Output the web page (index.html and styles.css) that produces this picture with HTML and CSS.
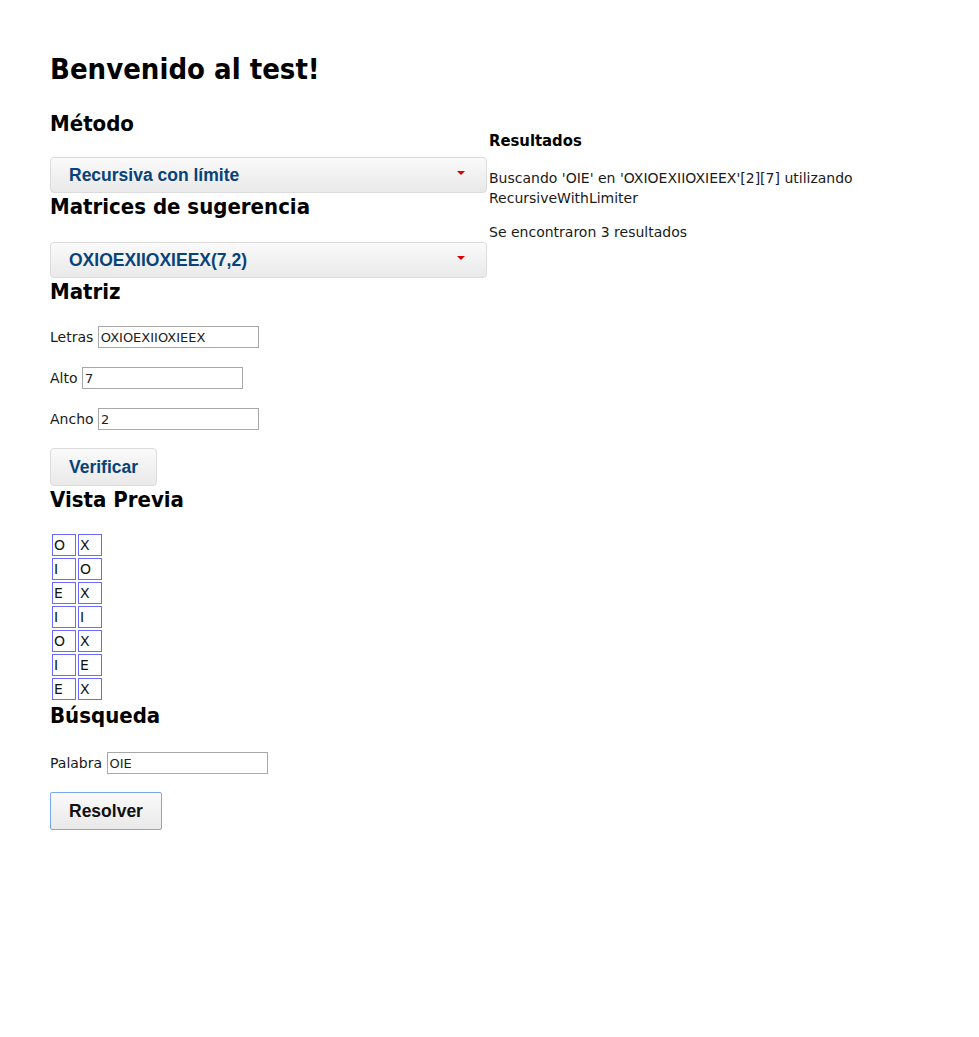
FILE: index.html
```html
<!DOCTYPE html>
<html lang="es">
<head>
<meta charset="utf-8">
<title>Benvenido al test!</title>
<link rel="stylesheet" href="styles.css">
</head>
<body>
<div class="page">
  <div class="left">
    <h1 class="title">Benvenido al test!</h1>
    <h2 class="section section-first">Método</h2>
    <div class="select"><span>Recursiva con límite</span><span class="caret"></span></div>
    <h2 class="section">Matrices de sugerencia</h2>
    <div class="select select-second"><span>OXIOEXIIOXIEEX(7,2)</span><span class="caret"></span></div>
    <h2 class="section">Matriz</h2>
    <p class="field field-first">Letras <input class="input" type="text" value="OXIOEXIIOXIEEX"></p>
    <p class="field">Alto <input class="input" type="text" value="7"></p>
    <p class="field">Ancho <input class="input" type="text" value="2"></p>
    <button class="btn">Verificar</button>
    <h2 class="section">Vista Previa</h2>
    <table class="grid">
      <tr><td>O</td><td>X</td></tr>
      <tr><td>I</td><td>O</td></tr>
      <tr><td>E</td><td>X</td></tr>
      <tr><td>I</td><td>I</td></tr>
      <tr><td>O</td><td>X</td></tr>
      <tr><td>I</td><td>E</td></tr>
      <tr><td>E</td><td>X</td></tr>
    </table>
    <h2 class="section">Búsqueda</h2>
    <p class="field field-search">Palabra <input class="input" type="text" value="OIE"></p>
    <button class="btn btn-focus">Resolver</button>
  </div>
  <div class="right">
    <h3 class="sub">Resultados</h3>
    <p class="text">Buscando 'OIE' en 'OXIOEXIIOXIEEX'[2][7] utilizando RecursiveWithLimiter</p>
    <p class="text text-second">Se encontraron 3 resultados</p>
  </div>
</div>
</body>
</html>
```
FILE: styles.css
```css
html, body {
  margin: 0;
  padding: 0;
  background: #fff;
}
body {
  font-family: "DejaVu Sans", sans-serif;
  font-size: 14px;
  color: #1a1a1a;
}
.page {
  display: flex;
  padding: 50px 50px 0 50px;
}
.left {
  width: 437px;
  flex: none;
}
.right {
  flex: 1;
  padding-left: 2px;
  padding-top: 81px;
}
.title {
  font-family: "DejaVu Sans Condensed", "DejaVu Sans", sans-serif;
  font-size: 29px;
  line-height: 38px;
  margin: 0;
  font-weight: bold;
  color: #000;
}
.section {
  font-family: "DejaVu Sans Condensed", "DejaVu Sans", sans-serif;
  font-size: 22px;
  line-height: 28px;
  margin: 0;
  font-weight: bold;
  color: #000;
}
.section-first {
  margin-top: 22px;
}
.select {
  margin-top: 19px;
  height: 34px;
  border: 1px solid #dcdcdc;
  border-radius: 4px;
  background: linear-gradient(#fafafa, #e9e9e9);
  display: flex;
  align-items: center;
  justify-content: space-between;
  padding: 0 21px 0 18px;
  font-family: "Liberation Sans", Arial, sans-serif;
  font-weight: bold;
  font-size: 17.5px;
  color: #07427a;
}
.select-second {
  margin-top: 21px;
}
.caret {
  width: 0;
  height: 0;
  border-left: 4px solid transparent;
  border-right: 4px solid transparent;
  border-top: 4px solid #d80000;
  margin-top: -4px;
}
.field {
  margin: 19px 0 0 0;
  line-height: 22px;
  height: 22px;
}
.field-first {
  margin-top: 20px;
}
.field-search {
  margin-top: 22px;
}
.input {
  width: 155px;
  height: 18px;
  padding: 1px 2px;
  border: 1px solid #a8a8a8;
  font-family: "DejaVu Sans", sans-serif;
  font-size: 13px;
  color: #222;
  vertical-align: top;
  margin: 0;
  box-sizing: content-box;
}
.btn {
  display: block;
  margin-top: 18px;
  height: 38px;
  padding: 0 18px;
  border: 1px solid #dcdcdc;
  border-radius: 4px;
  background: linear-gradient(#fafafa, #e9e9e9);
  font-family: "Liberation Sans", Arial, sans-serif;
  font-weight: bold;
  font-size: 17.5px;
  color: #07427a;
}
.btn-focus {
  border: 1px solid #7aa7f0;
  border-radius: 2px;
  color: #111;
  padding: 0 18px;
}
.grid {
  margin-top: 18px;
  border-spacing: 2px;
  border-collapse: separate;
}
.grid td {
  width: 21px;
  height: 20px;
  padding: 0 0 0 1px;
  border: 1px solid #6a6aff;
  font-size: 14px;
  line-height: 20px;
  color: #111;
}
.sub {
  font-family: "DejaVu Sans Condensed", "DejaVu Sans", sans-serif;
  font-size: 16.5px;
  line-height: 20px;
  margin: 0;
  font-weight: bold;
  color: #000;
}
.text {
  margin: 17px 0 0 0;
  line-height: 20px;
}
.text-second {
  margin-top: 14px;
}
```
